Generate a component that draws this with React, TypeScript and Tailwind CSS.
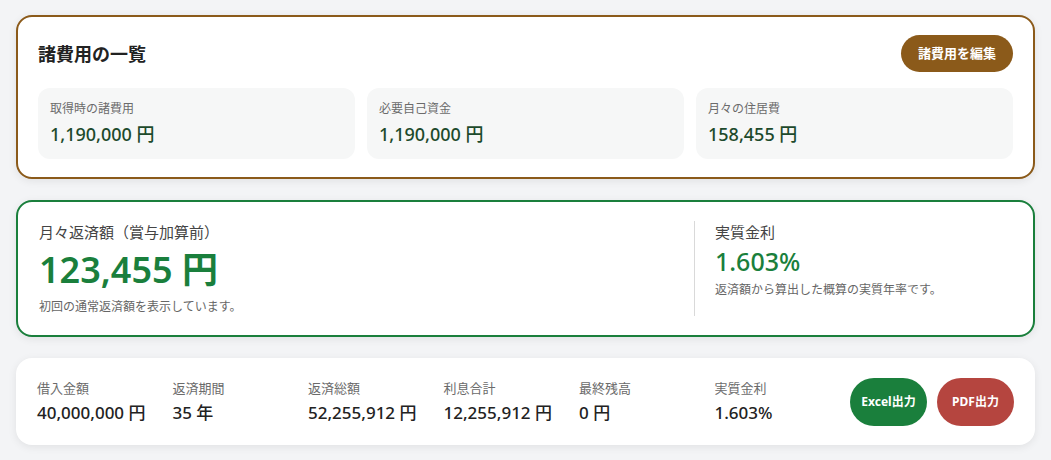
const costItems = [
  { label: '取得時の諸費用', value: '1,190,000 円' },
  { label: '必要自己資金', value: '1,190,000 円' },
  { label: '月々の住居費', value: '158,455 円' },
];

const summaryItems = [
  { label: '借入金額', value: '40,000,000 円' },
  { label: '返済期間', value: '35 年' },
  { label: '返済総額', value: '52,255,912 円' },
  { label: '利息合計', value: '12,255,912 円' },
  { label: '最終残高', value: '0 円' },
  { label: '実質金利', value: '1.603%' },
];

export default function App() {
  return (
    <div
      className="min-h-[460px] bg-[#f3f4f6] px-4 pt-[15px] pb-4 flex flex-col"
      style={{ fontFamily: '"Noto Sans", "Noto Sans CJK JP", sans-serif' }}
    >
      {/* 諸費用 */}
      <section className="bg-white border-2 border-[#8b5a1a] rounded-2xl px-5 py-[18px] shadow-[0_2px_8px_rgba(0,0,0,0.08)]">
        <div className="flex items-center justify-between mb-4">
          <h2 className="text-lg font-bold text-[#222]">諸費用の一覧</h2>
          <button className="h-[37px] px-[17px] rounded-full bg-[#8b5a1a] text-white text-[13px] font-bold">
            諸費用を編集
          </button>
        </div>
        <div className="grid grid-cols-3 gap-3">
          {costItems.map((item) => (
            <div key={item.label} className="h-[71px] bg-[#f6f7f7] rounded-xl px-3 pt-3">
              <div className="text-xs text-[#6b6b6b] leading-[18px]">{item.label}</div>
              <div className="mt-[3px] text-lg font-medium text-[#1d4a2c] leading-[27px]">
                {item.value}
              </div>
            </div>
          ))}
        </div>
      </section>

      {/* 月々返済額 */}
      <section className="mt-[21px] bg-white border-2 border-[#1a7f3c] rounded-2xl px-5 pt-[19px] pb-[19px] shadow-[0_2px_8px_rgba(0,0,0,0.08)] flex">
        <div className="flex-1 pl-px">
          <div className="text-[15px] text-[#444] leading-[22px]">月々返済額（賞与加算前）</div>
          <div className="text-[36px] font-semibold text-[#1a7f3c] leading-[48px] mt-[3px]">123,455 円</div>
          <div className="text-xs text-[#666] leading-[18px] mt-[4px]">初回の通常返済額を表示しています。</div>
        </div>
        <div className="w-[319px] border-l border-[#d9d9d9] pl-5">
          <div className="text-[15px] text-[#444] leading-[22px]">実質金利</div>
          <div className="text-[25px] font-medium text-[#1a7f3c] leading-[34px] mt-[1px]">1.603%</div>
          <div className="text-xs text-[#666] leading-[18px] mt-[3px]">返済額から算出した概算の実質年率です。</div>
        </div>
      </section>

      {/* サマリー */}
      <section className="mt-[21px] h-[87px] bg-white rounded-2xl px-[21px] shadow-[0_2px_8px_rgba(0,0,0,0.08)] flex items-center">
        <div className="flex-1 grid grid-cols-6">
          {summaryItems.map((item) => (
            <div key={item.label}>
              <div className="text-[13px] text-[#6b6b6b] leading-[19px]">{item.label}</div>
              <div className="text-[17px] font-medium text-[#222] leading-[24px] mt-[3px]">{item.value}</div>
            </div>
          ))}
        </div>
        <div className="flex gap-[10px]">
          <button className="h-12 w-[77px] rounded-full bg-[#1a7f3c] text-white text-xs font-bold">
            Excel出力
          </button>
          <button className="h-12 w-[77px] rounded-full bg-[#b5453f] text-white text-xs font-bold">
            PDF出力
          </button>
        </div>
      </section>
    </div>
  );
}
